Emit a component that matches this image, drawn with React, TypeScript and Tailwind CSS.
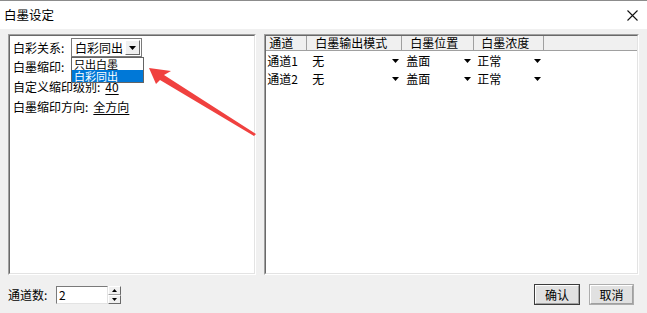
const FONT = { fontFamily: '"Noto Sans CJK SC", "Microsoft YaHei", sans-serif' };

function DownTri({ className = "" }: { className?: string }) {
  return (
    <svg width="7" height="4" viewBox="0 0 7 4" className={className}>
      <polygon points="0,0 7,0 3.5,4" fill="#000" />
    </svg>
  );
}

function GridRow({ ch, mode, pos, dens }: { ch: string; mode: string; pos: string; dens: string }) {
  return (
    <div className="flex h-[18px] items-center text-[12px] leading-none text-black">
      <div className="w-[41px] pl-[1px]">{ch}</div>
      <div className="flex w-[95px] items-center justify-between pl-[5px] pr-[3px]">
        <span>{mode}</span>
        <DownTri />
      </div>
      <div className="flex w-[72px] items-center justify-between pl-[4px] pr-[3px]">
        <span>{pos}</span>
        <DownTri />
      </div>
      <div className="flex w-[70px] items-center justify-between pl-[3px] pr-[3px]">
        <span>{dens}</span>
        <DownTri />
      </div>
    </div>
  );
}

export default function App() {
  return (
    <div
      className="relative flex h-[313px] w-[647px] flex-col overflow-hidden bg-[#f0f0f0] text-black"
      style={FONT}
    >
      {/* title bar */}
      <div className="flex h-[29px] items-center justify-between border-t border-[#8c8c8c] bg-white pl-[4px] pr-[9px]">
        <span className="text-[12.5px]">白墨设定</span>
        <svg width="11" height="11" viewBox="0 0 11 11">
          <path d="M0.5 0.5 L10.5 10.5 M10.5 0.5 L0.5 10.5" stroke="#111" strokeWidth="1.1" />
        </svg>
      </div>

      {/* panels */}
      <div className="flex gap-[8px] px-[8px] pt-[5px]">
        {/* left */}
        <div className="relative h-[241px] w-[249px] border border-b-white border-l-[#a0a0a0] border-r-white border-t-[#a0a0a0]">
          <div className="h-full border border-b-[#e3e3e3] border-l-[#696969] border-r-[#e3e3e3] border-t-[#696969] bg-white pl-[3px] pt-[2px] text-[12px] leading-none">
            <div className="flex h-[19px] items-center">
              <span className="w-[58px]">白彩关系:</span>
              <div className="relative flex h-[19px] w-[71px] items-center justify-between border border-[#7a7a7a] bg-white pl-[3px] pr-[1px]">
                <span>白彩同出</span>
                <div className="flex h-[15px] w-[15px] items-center justify-center border border-b-[#696969] border-l-white border-r-[#696969] border-t-white bg-[#f0f0f0]">
                  <DownTri />
                </div>
                <div className="absolute left-[-1px] top-[18px] z-10 w-[73px] border border-[#646464] bg-white">
                  <div className="flex h-[12px] items-center pl-[2px] text-[11px] leading-none">只出白墨</div>
                  <div className="flex h-[12px] items-center bg-[#0078d7] pl-[2px] text-[11px] leading-none text-white">白彩同出</div>
                </div>
              </div>
            </div>
            <div className="flex h-[20px] items-center">白墨缩印:</div>
            <div className="flex h-[20px] items-center">
              自定义缩印级别:<span className="ml-[5px] underline underline-offset-2">40</span>
            </div>
            <div className="flex h-[20px] items-center">
              白墨缩印方向:<span className="ml-[5px] underline underline-offset-2">全方向</span>
            </div>
          </div>
        </div>

        {/* right */}
        <div className="h-[241px] w-[376px] border border-b-white border-l-[#a0a0a0] border-r-white border-t-[#a0a0a0]">
          <div className="h-full border border-b-[#e3e3e3] border-l-[#696969] border-r-[#e3e3e3] border-t-[#696969] bg-white">
            <div className="flex h-[15px] items-center border-b border-[#a0a0a0] bg-[#f0f0f0] text-[12px] leading-none">
              <div className="h-full w-[41px] border-r border-[#a0a0a0] pl-[3px] pt-[1px]">通道</div>
              <div className="h-full w-[95px] border-r border-[#a0a0a0] pl-[8px] pt-[1px]">白墨输出模式</div>
              <div className="h-full w-[72px] border-r border-[#a0a0a0] pl-[8px] pt-[1px]">白墨位置</div>
              <div className="h-full w-[70px] border-r border-[#a0a0a0] pl-[7px] pt-[1px]">白墨浓度</div>
            </div>
            <div className="pt-[1px]">
              <GridRow ch="通道1" mode="无" pos="盖面" dens="正常" />
              <GridRow ch="通道2" mode="无" pos="盖面" dens="正常" />
            </div>
          </div>
        </div>
      </div>

      {/* bottom row */}
      <div className="flex flex-1 items-center justify-between pl-[8px] pr-[13px] pt-[1px] text-[12px] leading-none">
        <div className="flex items-center">
          <span className="w-[48px]">通道数:</span>
          <div className="flex h-[18px] w-[52px] items-center border border-b-[#e3e3e3] border-l-[#7a7a7a] border-r-[#e3e3e3] border-t-[#7a7a7a] bg-white pl-[2px]">
            2
          </div>
          <div className="flex h-[18px] w-[13px] flex-col">
            <div className="flex h-[9px] items-center justify-center border border-b-[#a0a0a0] border-l-white border-r-[#696969] border-t-white bg-[#f0f0f0]">
              <svg width="5" height="3" viewBox="0 0 5 3"><polygon points="0,3 5,3 2.5,0" fill="#000" /></svg>
            </div>
            <div className="flex h-[9px] items-center justify-center border border-b-[#696969] border-l-white border-r-[#696969] border-t-white bg-[#f0f0f0]">
              <svg width="5" height="3" viewBox="0 0 5 3"><polygon points="0,0 5,0 2.5,3" fill="#000" /></svg>
            </div>
          </div>
        </div>
        <div className="flex items-center gap-[9px]">
          <div className="flex h-[21px] w-[46px] items-center justify-center border border-[#3c3c3c] bg-[#e1e1e1]">
            <div className="flex h-full w-full items-center justify-center border border-b-[#a0a0a0] border-l-white border-r-[#a0a0a0] border-t-white">确认</div>
          </div>
          <div className="flex h-[21px] w-[45px] items-center justify-center border border-[#adadad] bg-[#e1e1e1]">
            <div className="flex h-full w-full items-center justify-center border border-b-[#a0a0a0] border-l-white border-r-[#a0a0a0] border-t-white">取消</div>
          </div>
        </div>
      </div>

      {/* red annotation arrow */}
      <svg className="pointer-events-none absolute left-0 top-0 z-20" width="647" height="313" viewBox="0 0 647 313">
        <polygon
          points="149,68 171,71 164,75 256,134 254,136 160,80 156,84"
          fill="#f0413f"
        />
      </svg>
    </div>
  );
}
